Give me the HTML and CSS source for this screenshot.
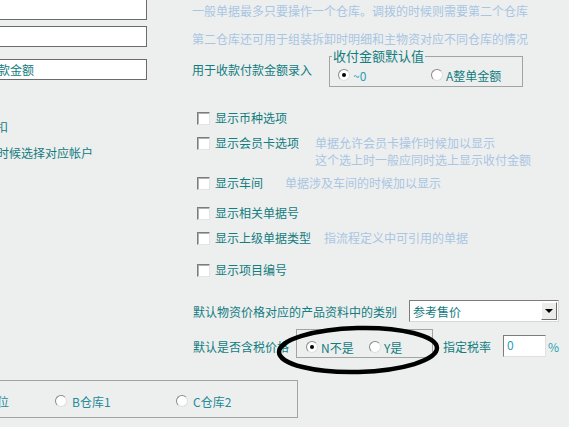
FILE: index.html
```html
<!DOCTYPE html>
<html lang="zh-CN">
<head>
    <meta charset="UTF-8">
    <meta name="viewport" content="width=device-width, initial-scale=1.0">
    <title>单据选项</title>
    <link rel="stylesheet" href="styles.css">
</head>
<body>
    <div class="panel">
        <div class="main">
            <div class="left-col">
                <div class="edit edit-first"></div>
                <div class="edit edit-second"></div>
                <div class="edit edit-third">款金额</div>
                <p class="left-note note-first">扣</p>
                <p class="left-note note-second">时候选择对应帐户</p>
            </div>

            <div class="right-col">
                <p class="hint hint-top">一般单据最多只要操作一个仓库。调拨的时候则需要第二个仓库</p>
                <p class="hint hint-second">第二仓库还可用于组装拆卸时明细和主物资对应不同仓库的情况</p>

                <div class="amount-row">
                    <span class="amount-label">用于收款付款金额录入</span>
                    <div class="groupbox amount-box">
                        <span class="caption">收付金额默认值</span>
                        <label class="radio-item"><span class="radio checked"></span><span class="alt">~0</span></label>
                        <label class="radio-item"><span class="radio"></span>A整单金额</label>
                    </div>
                </div>

                <!-- 显示选项 -->
                <div class="check-row row-currency">
                    <span class="checkbox"></span><span class="check-text">显示币种选项</span>
                </div>
                <div class="check-row row-member">
                    <span class="checkbox"></span><span class="check-text">显示会员卡选项</span>
                    <p class="check-hint hint-member">单据允许会员卡操作时候加以显示<br>这个选上时一般应同时选上显示收付金额</p>
                </div>
                <div class="check-row row-workshop">
                    <span class="checkbox"></span><span class="check-text">显示车间</span>
                    <p class="check-hint hint-workshop">单据涉及车间的时候加以显示</p>
                </div>
                <div class="check-row row-related">
                    <span class="checkbox"></span><span class="check-text">显示相关单据号</span>
                </div>
                <div class="check-row row-parent">
                    <span class="checkbox"></span><span class="check-text">显示上级单据类型</span>
                    <p class="check-hint hint-parent">指流程定义中可引用的单据</p>
                </div>
                <div class="check-row row-project">
                    <span class="checkbox"></span><span class="check-text">显示项目编号</span>
                </div>

                <div class="price-row">
                    <span class="price-label">默认物资价格对应的产品资料中的类别</span>
                    <div class="combo">
                        <span class="combo-text">参考售价</span>
                        <span class="combo-button"><span class="arrow"></span></span>
                    </div>
                </div>

                <div class="tax-row">
                    <span class="tax-label">默认是否含税价格</span>
                    <div class="groupbox tax-box">
                        <label class="radio-item"><span class="radio checked"></span>N不是</label>
                        <label class="radio-item"><span class="radio"></span>Y是</label>
                    </div>
                    <span class="rate-label">指定税率</span>
                    <div class="rate-input">0</div>
                    <span class="percent">%</span>
                </div>
            </div>
        </div>

        <div class="groupbox store-box">
            <div class="store-grid">
                <label class="radio-item">位</label>
                <label class="radio-item"><span class="radio"></span>B仓库1</label>
                <label class="radio-item"><span class="radio"></span>C仓库2</label>
            </div>
        </div>

        <svg class="ring" width="180" height="60" viewBox="0 0 180 60">
            <ellipse cx="88" cy="28" rx="79" ry="22" transform="rotate(-1.5 88 28)" fill="none" stroke="#000" stroke-width="4.5"/>
        </svg>
    </div>
</body>
</html>
```

FILE: styles.css
```css
body {
    margin: 0;
    padding: 0;
    background-color: #fff;
    font-family: "Noto Sans CJK SC", "DejaVu Sans", sans-serif;
    font-size: 12px;
    color: #127c7e;
}
p {
    margin: 0;
}
.panel {
    position: relative;
    width: 569px;
    height: 427px;
    overflow: hidden;
    background-color: #edefef;
}
.main {
    display: flex;
}

/* left column, clipped at the window edge */
.left-col {
    width: 196px;
    margin-left: -4px;
    flex-shrink: 0;
}
.edit {
    box-sizing: border-box;
    width: 148px;
    height: 21px;
    margin-left: 3px;
    background-color: #fff;
    border: 1px solid #6b6b6b;
    line-height: 19px;
    white-space: nowrap;
    overflow: hidden;
}
.edit-first {
    margin-top: -1px;
}
.edit-second {
    margin-top: 6px;
}
.edit-third {
    margin-top: 12px;
    text-indent: -2px;
}
.left-note {
    line-height: 16px;
    white-space: nowrap;
}
.note-first {
    margin-top: 39px;
}
.note-second {
    margin-top: 10px;
    margin-left: 1px;
}

/* right column */
.right-col {
    width: 377px;
    flex-shrink: 0;
}
.hint {
    line-height: 22px;
    color: #a9c5e2;
    white-space: nowrap;
}
.hint-second {
    margin-top: 6px;
}
.amount-row {
    display: flex;
    align-items: flex-end;
    height: 37px;
}
.amount-label {
    width: 137px;
    align-self: center;
    padding-top: 1px;
}
.groupbox {
    position: relative;
    box-sizing: border-box;
    border: 1px solid #a3a3a3;
}
.caption {
    position: absolute;
    top: -8px;
    left: 2px;
    padding: 0 1px;
    line-height: 14px;
    font-size: 13px;
    background-color: #edefef;
}
.amount-box {
    display: grid;
    grid-template-columns: 93px auto;
    align-items: start;
    width: 194px;
    height: 31px;
    padding: 11px 0 0 8px;
}
.radio-item {
    display: flex;
    align-items: center;
    gap: 3px;
    height: 14px;
    white-space: nowrap;
}
.radio {
    position: relative;
    box-sizing: border-box;
    width: 12px;
    height: 12px;
    border-radius: 50%;
    background-color: #fff;
    border: 1px solid;
    border-color: #8a8a8a #dedede #dedede #8a8a8a;
    flex-shrink: 0;
}
.radio.checked::after {
    content: "";
    position: absolute;
    left: 3px;
    top: 3px;
    width: 4px;
    height: 4px;
    border-radius: 50%;
    background-color: #000;
}
.alt {
    color: #2a9fb2;
}

/* check box rows */
.check-row {
    display: flex;
    align-items: flex-start;
    margin-left: 5px;
}
.checkbox {
    box-sizing: border-box;
    width: 13px;
    height: 13px;
    margin-top: 4px;
    background-color: #fff;
    border: 1px solid;
    border-color: #7c7c7c #e4e4e4 #e4e4e4 #7c7c7c;
    box-shadow: inset 1px 1px 0 #b0b0b0;
    flex-shrink: 0;
}
.check-text {
    margin-left: 5px;
    line-height: 20px;
    white-space: nowrap;
}
.check-hint {
    color: #a9c5e2;
    line-height: 17px;
    margin-top: 1px;
    white-space: nowrap;
}
.row-currency {
    margin-top: 21px;
}
.row-member {
    margin-top: 5px;
}
.hint-member {
    margin-left: 16px;
}
.row-workshop {
    margin-top: 5px;
}
.hint-workshop {
    margin-left: 22px;
}
.row-related {
    margin-top: 10px;
}
.row-parent {
    margin-top: 5px;
}
.hint-parent {
    margin-left: 13px;
}
.row-project {
    margin-top: 12px;
}

/* price category */
.price-row {
    display: flex;
    align-items: center;
    margin-top: 20px;
    height: 22px;
}
.price-label {
    width: 216px;
    margin-left: 1px;
    white-space: nowrap;
}
.combo {
    box-sizing: border-box;
    display: flex;
    align-items: center;
    justify-content: space-between;
    width: 150px;
    height: 22px;
    background-color: #fff;
    border: 1px solid;
    border-color: #7c7c7c #d8d8d8 #d8d8d8 #7c7c7c;
    padding: 1px 1px 1px 3px;
}
.combo-button {
    box-sizing: border-box;
    display: flex;
    align-items: center;
    justify-content: center;
    width: 16px;
    height: 18px;
    background-color: #ececea;
    border: 1px solid;
    border-color: #fff #6e6e6e #6e6e6e #fff;
}
.arrow {
    width: 0;
    height: 0;
    border-left: 4px solid transparent;
    border-right: 4px solid transparent;
    border-top: 4px solid #000;
}

/* tax row */
.tax-row {
    display: flex;
    align-items: flex-start;
    margin-top: 7px;
    height: 29px;
}
.tax-label {
    width: 103px;
    margin-left: 1px;
    margin-top: 10px;
    line-height: 16px;
    white-space: nowrap;
}
.tax-box {
    display: grid;
    grid-template-columns: 63px auto;
    align-items: start;
    width: 137px;
    height: 29px;
    padding: 10px 0 0 9px;
}
.rate-label {
    margin-left: 10px;
    margin-top: 10px;
    line-height: 16px;
}
.rate-input {
    box-sizing: border-box;
    width: 43px;
    height: 22px;
    margin-left: 12px;
    margin-top: 6px;
    padding-left: 3px;
    line-height: 18px;
    background-color: #fff;
    border: 1px solid;
    border-color: #7c7c7c #e0e0e0 #e0e0e0 #7c7c7c;
    color: #2a9fb2;
}
.percent {
    margin-left: 2px;
    margin-top: 10px;
    line-height: 16px;
    color: #2a9fb2;
}

/* warehouse choice at the bottom */
.store-box {
    width: 299px;
    height: 38px;
    margin-top: 22px;
    margin-left: -1px;
    padding-top: 13px;
}
.store-grid {
    display: grid;
    grid-template-columns: 58px 121px auto;
    margin-left: -3px;
    gap: 0;
}
.store-grid .radio-item {
    gap: 5px;
    color: #1f8a98;
}

/* the hand drawn mark over the tax options */
.ring {
    position: absolute;
    left: 270px;
    top: 322px;
}
```
